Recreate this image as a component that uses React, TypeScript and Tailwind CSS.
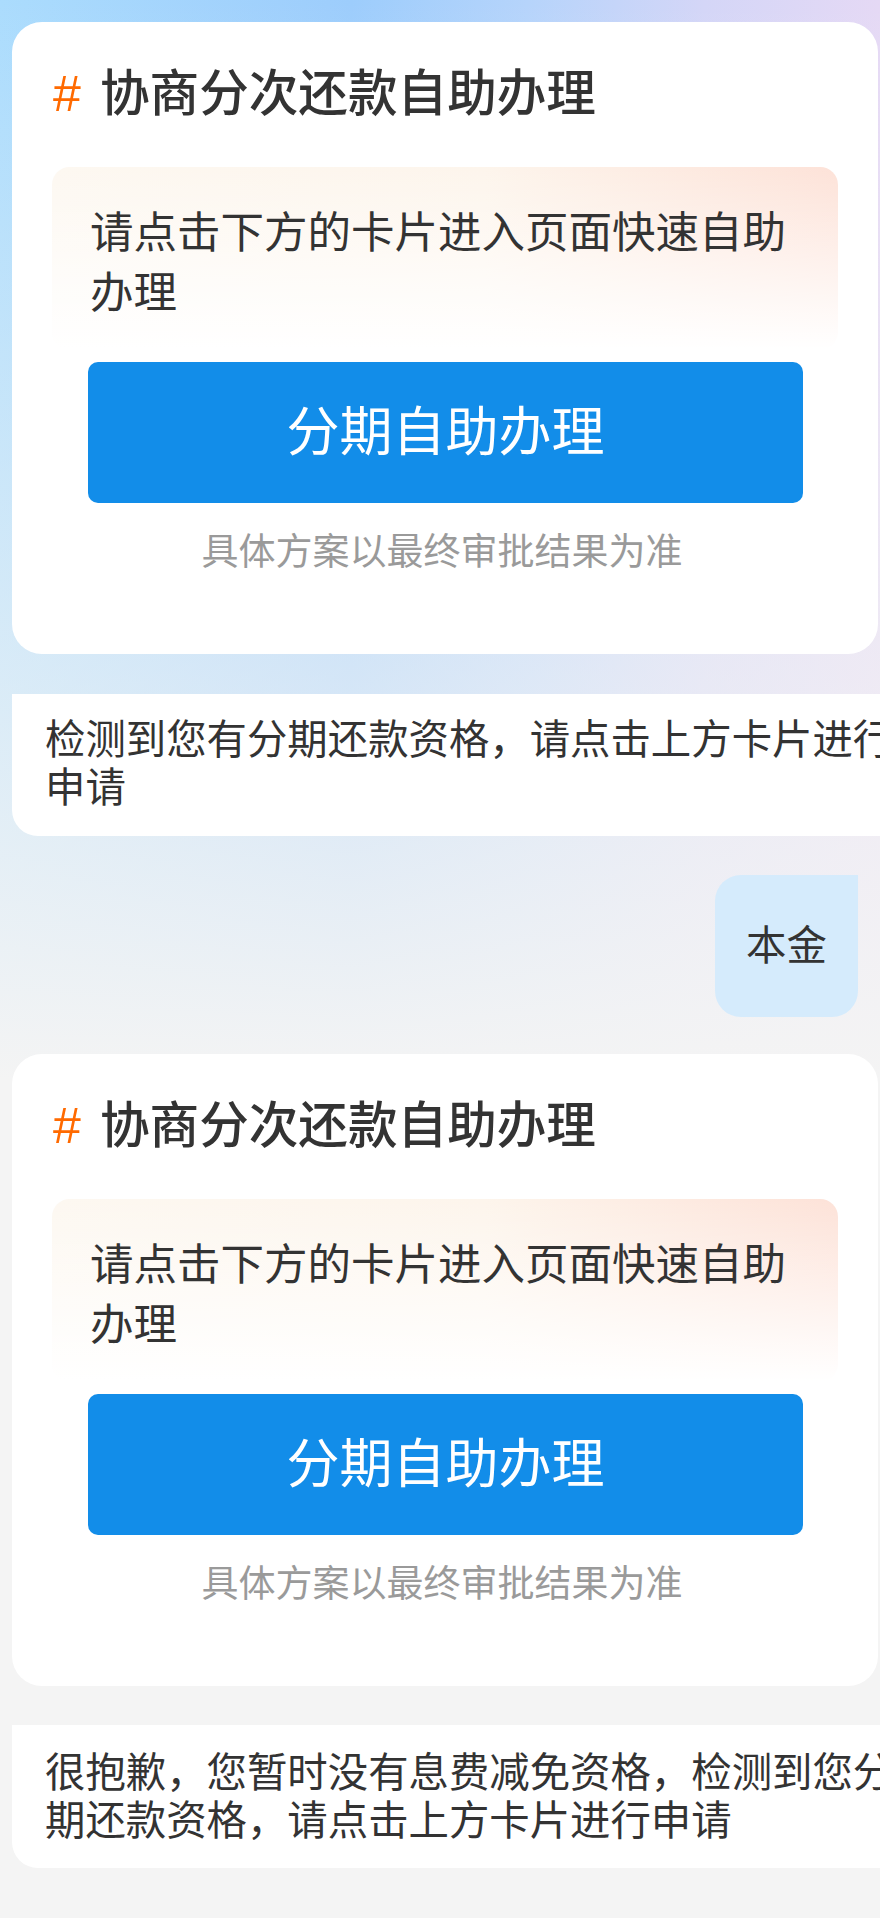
import React from "react";

const font = "font-['Liberation_Sans','Noto_Sans_CJK_SC',sans-serif]";

// Self-service card
const InstallmentCard = () => {
  return (
    <div className="w-[866px] ml-[12px] bg-white rounded-[30px] pt-[42px] pb-[77px]">
      {/* Title */}
      <div className="flex items-center pl-[41px] h-[60px] leading-[60px]">
        <span className="text-[#ff6a00] text-[50px] w-[47px]">#</span>
        <span className="text-[#333333] text-[49.6px] font-medium">
          协商分次还款自助办理
        </span>
      </div>

      {/* Hint box */}
      <div className="mx-[40px] mt-[43px] h-[182px] rounded-[18px] pt-[36px] pl-[38px] pr-[38px] bg-[linear-gradient(to_bottom,rgba(255,255,255,0)_0%,#ffffff_100%),linear-gradient(to_right,#fdf8f1_0%,#fdf5ec_55%,#fde2d8_100%)]">
        <p className="text-[#333333] text-[43.5px] leading-[60px]">
          请点击下方的卡片进入页面快速自助办理
        </p>
      </div>

      {/* Action button */}
      <button className="block ml-[76px] mt-[13px] w-[715px] h-[141px] rounded-[10px] bg-[#128de9] text-white text-[53px] leading-[141px]">
        分期自助办理
      </button>

      <p className="mt-[26px] text-center text-[#9a9a9a] text-[37px] leading-[48px] pr-[6px]">
        具体方案以最终审批结果为准
      </p>
    </div>
  );
};

const BotBubble = ({ text, className }: { text: string; className?: string }) => (
  <div
    className={`w-[930px] ml-[12px] bg-white rounded-[26px] rounded-tl-none pl-[33px] pr-[37px] ${className ?? ""}`}
  >
    <p className="text-[#333333] text-[40.4px] leading-[48px]">{text}</p>
  </div>
);

const App = () => {
  return (
    <div
      className={`${font} w-[880px] min-h-[1918px] overflow-hidden pt-[22px] bg-[linear-gradient(to_bottom,rgba(244,244,244,0)_0px,#f4f4f4_1080px),linear-gradient(to_right,#abdcfd_0%,#9dcdfc_40%,#b6d4fb_60%,#d4d6f7_80%,#e5d9f5_100%)]`}
    >
      <InstallmentCard />

      <BotBubble
        className="mt-[40px] pt-[22px] pb-[24px]"
        text="检测到您有分期还款资格，请点击上方卡片进行申请"
      />

      {/* User message */}
      <div className="flex justify-end pr-[22px] mt-[39px]">
        <div className="w-[143px] h-[142px] flex items-center justify-center bg-[#d5ebfc] rounded-[26px] rounded-tr-none">
          <span className="text-[#333333] text-[40.4px] leading-[48px]">本金</span>
        </div>
      </div>

      <div className="mt-[37px]">
        <InstallmentCard />
      </div>

      <BotBubble
        className="mt-[39px] pt-[24px] pb-[23px]"
        text="很抱歉，您暂时没有息费减免资格，检测到您分期还款资格，请点击上方卡片进行申请"
      />
    </div>
  );
};

export default App;
